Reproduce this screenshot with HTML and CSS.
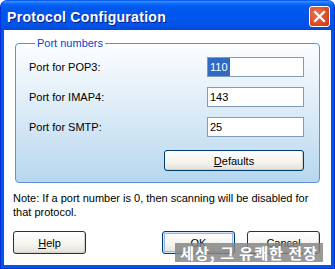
FILE: index.html
```html
<!DOCTYPE html>
<html lang="en">
<head>
    <meta charset="UTF-8">
    <title>Protocol Configuration</title>
    <link rel="stylesheet" href="styles.css">
</head>
<body>
    <div class="window">
        <div class="titlebar">
            <span class="title">Protocol Configuration</span>
            <button class="close-btn" aria-label="Close">
                <svg width="13" height="13" viewBox="0 0 13 13">
                    <path d="M2 2 L11 11 M11 2 L2 11" stroke="#fff" stroke-width="2.2" stroke-linecap="square"/>
                </svg>
            </button>
        </div>
        <div class="client">
            <fieldset class="group">
                <legend>Port numbers</legend>
                <div class="row">
                    <label for="pop3">Port for POP3:</label>
                    <input id="pop3" class="port selected" type="text" value="110">
                </div>
                <div class="row">
                    <label for="imap4">Port for IMAP4:</label>
                    <input id="imap4" class="port" type="text" value="143">
                </div>
                <div class="row">
                    <label for="smtp">Port for SMTP:</label>
                    <input id="smtp" class="port" type="text" value="25">
                </div>
                <div class="row right">
                    <button class="btn wide"><u>D</u>efaults</button>
                </div>
            </fieldset>
            <p class="note">Note: If a port number is 0, then scanning will be disabled for that protocol.</p>
            <div class="actions">
                <button class="btn"><u>H</u>elp</button>
                <div class="actions-right">
                    <button class="btn default">OK</button>
                    <button class="btn">Cancel</button>
                </div>
            </div>
        </div>
        <div class="watermark">세상, 그 유쾌한 전장</div>
    </div>
</body>
</html>
```

FILE: styles.css
```css
body {
    margin: 0;
    width: 335px;
    height: 269px;
    overflow: hidden;
    font-family: "Liberation Sans", Arial, sans-serif;
    font-size: 11px;
    color: #000;
}

.window {
    position: relative;
    width: 335px;
    height: 269px;
    box-sizing: border-box;
    display: flex;
    flex-direction: column;
    background: #0055ea;
    border-radius: 7px 7px 0 0;
    border: 1px solid #0831d9;
    border-top-color: #0a5ef6;
}

.titlebar {
    height: 29px;
    flex: none;
    display: flex;
    align-items: center;
    justify-content: space-between;
    padding: 0 4px 0 6px;
    border-radius: 6px 6px 0 0;
    background: linear-gradient(to bottom, #3d95ff 0px, #0a66f5 3px, #0058ee 7px, #0055eb 18px, #0153e8 24px, #0048da 29px);
}

.title {
    color: #fff;
    font-weight: bold;
    font-size: 14px;
    letter-spacing: 0.3px;
    text-shadow: 1px 1px #0a1e8a;
    padding-top: 2px;
}

.close-btn {
    width: 21px;
    height: 21px;
    padding: 0;
    margin-top: 2px;
    display: flex;
    align-items: center;
    justify-content: center;
    border: 1px solid #fff;
    border-radius: 3px;
    background: radial-gradient(circle at 35% 35%, #ee7455, #d9441f 70%, #c03612);
}

.client {
    flex: 1;
    margin: 0 3px 3px 3px;
    padding: 0 11px 0 9px;
    background: #fff;
    display: flex;
    flex-direction: column;
}

.group {
    margin: 7px 0 0 2px;
    padding: 7px 15px 11px 13px;
    border: 1px solid #5a93cf;
    border-radius: 4px;
    background: linear-gradient(to bottom, #fdfeff, #b7d7ee);
    display: flex;
    flex-direction: column;
    gap: 10px;
}

.group legend {
    color: #0046d5;
    padding: 0 2px;
    margin-left: 6px;
    line-height: 13px;
}

.row {
    display: flex;
    align-items: center;
    justify-content: space-between;
    height: 20px;
}

.row.right {
    justify-content: flex-end;
    margin-top: 3px;
    height: 21px;
}

.port {
    width: 97px;
    height: 20px;
    box-sizing: border-box;
    border: 1px solid #7f9db9;
    padding: 0 2px;
    font-family: "Liberation Sans", Arial, sans-serif;
    font-size: 11px;
    background: #fff;
    outline: none;
}

.port.selected {
    color: #fff;
    background: linear-gradient(to right, #316ac5 0, #316ac5 22px, #fff 22px);
}

.btn {
    width: 73px;
    height: 23px;
    padding: 0;
    font-family: "Liberation Sans", Arial, sans-serif;
    font-size: 11px;
    color: #000;
    border: 1px solid #003c74;
    border-radius: 3px;
    background: linear-gradient(to bottom, #ffffff, #f4f3ee 60%, #e3e0d6);
    box-shadow: inset -1px -1px 0 #d6d0c5;
}

.btn.wide {
    width: 140px;
    height: 21px;
}

.btn.default {
    box-shadow: inset 0 0 0 1px #cee7ff, inset 0 0 0 2px #98b8ea;
}

.note {
    margin: 8px 0 0 0;
    line-height: 14px;
    width: 300px;
}

.actions {
    display: flex;
    justify-content: space-between;
    margin-top: 12px;
}

.actions-right {
    display: flex;
    gap: 12px;
}

.watermark {
    position: absolute;
    left: 174px;
    top: 242px;
    width: 148px;
    height: 19px;
    background: rgba(130, 130, 130, 0.82);
    color: #fff;
    font-family: "Noto Sans CJK KR", sans-serif;
    font-weight: bold;
    font-size: 15px;
    line-height: 19px;
    text-align: center;
    letter-spacing: 1px;
    white-space: nowrap;
}
```
